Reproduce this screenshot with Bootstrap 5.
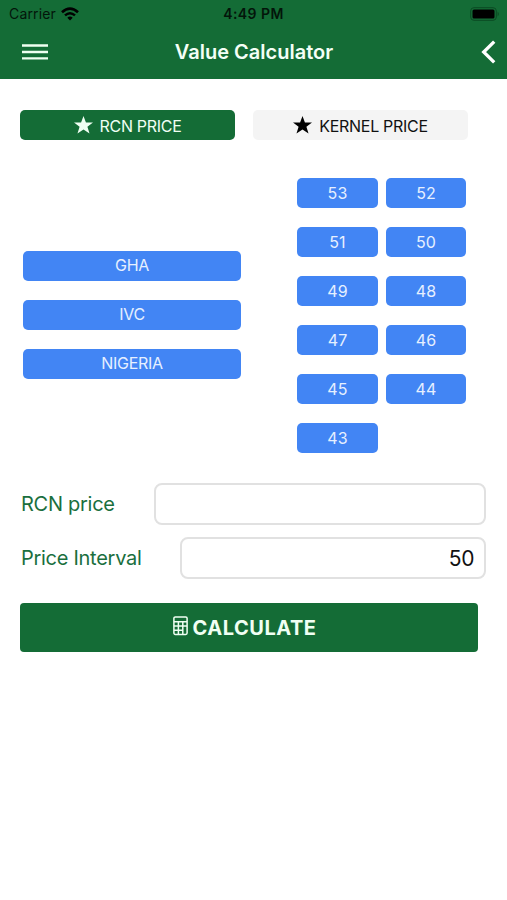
<!DOCTYPE html>
<html lang="en">
<head>
<meta charset="utf-8">
<meta name="viewport" content="width=device-width, initial-scale=1">
<title>Value Calculator</title>
<link href="https://cdn.jsdelivr.net/npm/bootstrap@5.3.0/dist/css/bootstrap.min.css" rel="stylesheet">
<style>
:root { --green: #146c36; --blue: #4285f4; }
body { font-family: Inter, "Liberation Sans", sans-serif; background: #fff; min-height: 900px; overflow: hidden; }
svg { display: block; flex: none; }
.app-header { background: var(--green); height: 79px; }
.status { height: 27px; padding: 0 7px 0 9px; color: #03150a; font-size: 14px; line-height: 27px; }
.status > div { flex: 1 1 0; }
.status .carrier { letter-spacing: .15px; }
.status .clock { font-weight: 600; font-size: 14px; letter-spacing: .45px; margin-left: -2px; }
.title-bar { height: 50px; padding: 0 11px 0 22px; }
.title-bar > .side { flex: 1 1 0; }
.title-bar h1 { font-size: 20px; font-weight: 600; letter-spacing: 0; color: #f4fff6; margin-left: -10px; }
.btn-flat { height: 30px; padding: 0; border: 0; border-radius: 5px; font-size: 16px; line-height: 30px; letter-spacing: -.3px; }
.btn-blue, .btn-blue:hover { background: var(--blue); color: #e6f0ff; }
.btn-green, .btn-green:hover { background: var(--green); color: #f0fff3; }
.btn-pale, .btn-pale:hover { background: #f4f4f4; color: #111; }
.tabs { padding: 31px 0 0 20px; gap: 18px; }
.tabs .btn { width: 215px; gap: 7px; }
.tabs .btn span { padding-top: 1px; }
.choices { padding: 38px 41px 0 23px; }
.origins { width: 218px; gap: 19px; margin-top: -2px; }
.outturns { display: grid; grid-template-columns: 81px 80px; gap: 19px 8px; }
.outturns .btn { letter-spacing: .1px; }
.choices .btn { line-height: 29px; }
.fields { padding: 30px 21px 0; gap: 12px; }
.fields label { color: #1a6f3e; font-size: 20px; letter-spacing: -.28px; }
.label-rcn { width: 133px; }
.label-interval { width: 159px; }
.fields .form-control { height: 42px; border: 2px solid #e1e1e1; border-radius: 8px; padding: 0 10px; font-size: 21px; line-height: 36px; text-align: right; color: #111; letter-spacing: -.4px; }
.calc { width: 458px; height: 49px; margin: 24px 0 0 20px; padding: 0 9px 0 0; border: 0; border-radius: 4px; gap: 5px; font-size: 20px; font-weight: 700; letter-spacing: .5px; }
.calc svg { margin-top: -4px; }
</style>
</head>
<body>
<header class="app-header">
  <div class="status d-flex align-items-center">
    <div class="d-flex align-items-center"><span class="carrier">Carrier</span>
      <svg class="ms-1" width="20" height="14" viewBox="0 0 20 14" fill="none" stroke="#000"><path d="M2 5.2Q10-2 18 5.2" stroke-width="2.7"/><path d="M5 8.4Q10 4 15 8.4" stroke-width="2.5"/><path d="M7.3 10.7Q10 8.3 12.7 10.7L10 13.5Z" fill="#000" stroke="none"/></svg>
    </div>
    <span class="clock">4:49 PM</span>
    <div class="d-flex justify-content-end">
      <svg width="30" height="14" viewBox="0 0 30 14"><rect x=".7" y=".7" width="25.6" height="12.6" rx="3.2" fill="none" stroke="#0b4a23"/><rect x="2.5" y="2.5" width="22" height="9" rx="1.5"/><path d="M27.6 4.5Q30 7 27.6 9.5Z" fill="#0b4a23"/></svg>
    </div>
  </div>
  <div class="title-bar d-flex align-items-center">
    <div class="side"><svg width="26" height="18" viewBox="0 0 26 18" fill="none" stroke="#effff1" stroke-width="2.3"><path d="M0 2.5h26M0 9h26M0 15.4h26"/></svg></div>
    <h1 class="mt-0 mb-0">Value Calculator</h1>
    <div class="side d-flex justify-content-end"><svg width="15" height="24" viewBox="0 0 15 24" fill="none" stroke="#fff" stroke-width="3.3"><path d="M13.2 1.6 2.7 12l10.5 10.4"/></svg></div>
  </div>
</header>
<main>
  <div class="tabs d-flex">
    <button class="btn btn-flat btn-green d-flex justify-content-center align-items-center"><svg width="19" height="18" viewBox="0 0 18 18" preserveAspectRatio="none" fill="currentColor"><path d="M9 0 11.3 6.5H18L12.7 10.8 14.7 17.5 9 13.5 3.3 17.5 5.3 10.8 0 6.5H6.7Z"/></svg><span>RCN PRICE</span></button>
    <button class="btn btn-flat btn-pale d-flex justify-content-center align-items-center"><svg width="19" height="18" viewBox="0 0 18 18" preserveAspectRatio="none" fill="#000"><path d="M9 0 11.3 6.5H18L12.7 10.8 14.7 17.5 9 13.5 3.3 17.5 5.3 10.8 0 6.5H6.7Z"/></svg><span>KERNEL PRICE</span></button>
  </div>
  <div class="choices d-flex justify-content-between align-items-center">
    <div class="origins d-flex flex-column">
      <button class="btn btn-flat btn-blue">GHA</button>
      <button class="btn btn-flat btn-blue">IVC</button>
      <button class="btn btn-flat btn-blue">NIGERIA</button>
    </div>
    <div class="outturns">
      <button class="btn btn-flat btn-blue">53</button><button class="btn btn-flat btn-blue">52</button>
      <button class="btn btn-flat btn-blue">51</button><button class="btn btn-flat btn-blue">50</button>
      <button class="btn btn-flat btn-blue">49</button><button class="btn btn-flat btn-blue">48</button>
      <button class="btn btn-flat btn-blue">47</button><button class="btn btn-flat btn-blue">46</button>
      <button class="btn btn-flat btn-blue">45</button><button class="btn btn-flat btn-blue">44</button>
      <button class="btn btn-flat btn-blue">43</button>
    </div>
  </div>
  <div class="fields d-flex flex-column">
    <div class="d-flex align-items-center"><label class="label-rcn flex-shrink-0" for="rcn">RCN price</label><input id="rcn" class="form-control" type="text"></div>
    <div class="d-flex align-items-center"><label class="label-interval flex-shrink-0" for="step">Price Interval</label><input id="step" class="form-control" type="text" value="50"></div>
  </div>
  <button class="calc btn btn-green d-flex justify-content-center align-items-center"><svg width="15" height="20" viewBox="0 0 15 20" fill="none" stroke="currentColor" stroke-width="1.5"><rect x=".9" y=".9" width="13.2" height="17.6" rx="1.4"/><path d="M1 5.8h13M1 10h13M1 14.2h9M5.4 6v12M9.8 6v12"/></svg><span>CALCULATE</span></button>
</main>
<script src="https://cdn.jsdelivr.net/npm/bootstrap@5.3.0/dist/js/bootstrap.bundle.min.js"></script>
</body>
</html>
